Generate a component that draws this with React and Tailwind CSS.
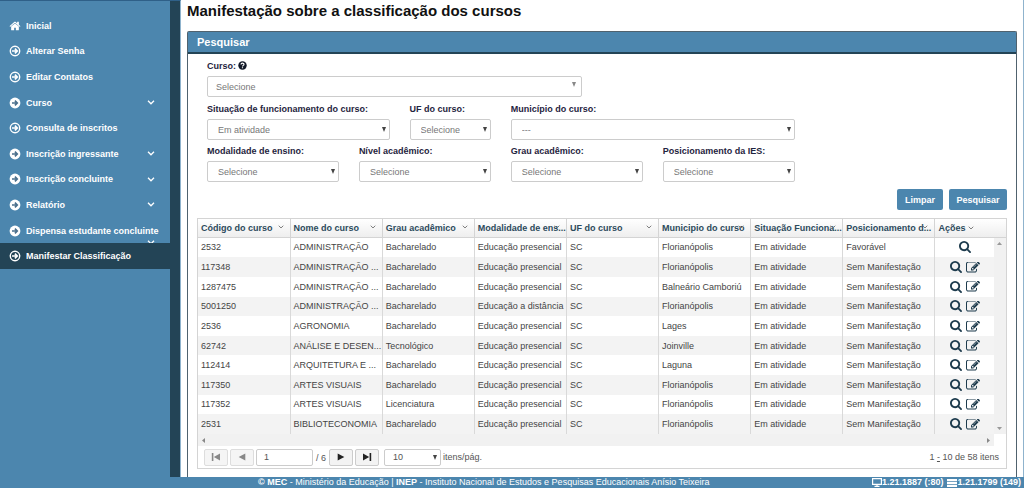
import React from "react";

const HOME =
  "M1472 992v480q0 26-19 45t-45 19h-384v-384h-256v384h-384q-26 0-45-19t-19-45v-480q0-1 .5-3t.5-3l575-474 575 474q1 2 1 6zm223-69l-62 74q-8 9-21 11h-3q-13 0-21-7l-692-577-692 577q-12 8-24 7-13-2-21-11l-62-74q-8-10-7-23.5t11-21.5l719-599q32-26 76-26t76 26l244 204v-195q0-14 9-23t23-9h192q14 0 23 9t9 23v408l219 182q10 8 11 21.5t-7 23.5z";
const SEARCH =
  "M1216 832q0-185-131.5-316.5t-316.5-131.5-316.5 131.5-131.5 316.5 131.5 316.5 316.5 131.5 316.5-131.5 131.5-316.5zm512 832q0 52-38 90t-90 38q-54 0-90-38l-343-342q-179 124-399 124-143 0-273.5-55.5t-225-150-150-225-55.5-273.5 55.5-273.5 150-225 225-150 273.5-55.5 273.5 55.5 225 150 150 225 55.5 273.5q0 220-124 399l343 343q37 37 37 90z";
const EDIT =
  "M888 1184l116-116-152-152-116 116v56h96v96h56zm440-720q-16-16-33 1l-350 350q-17 17-1 33t33-1l350-350q17-17 1-33zm80 594v190q0 119-84.5 203.5t-203.5 84.5h-832q-119 0-203.5-84.5t-84.5-203.5v-832q0-119 84.5-203.5t203.5-84.5h832q63 0 117 25 15 7 18 23 3 17-9 29l-49 49q-14 14-32 8-23-6-45-6h-832q-66 0-113 47t-47 113v832q0 66 47 113t113 47h832q66 0 113-47t47-113v-126q0-13 9-22l64-64q15-15 35-7t20 29zm-96-738l288 288-672 672h-288v-288zm444 132l-92 92-288-288 92-92q28-28 68-28t68 28l152 152q28 28 28 68t-28 68z";

function Glyph({ d, box = "0 0 1792 1792", className }) {
  return (
    <svg viewBox={box} className={className} fill="currentColor" aria-hidden="true">
      <path d={d} />
    </svg>
  );
}

function ArrowCircle({ filled }) {
  return (
    <svg viewBox="0 0 12 12" className="size-3 shrink-0" fill="none" aria-hidden="true">
      {filled ? (
        <circle cx="6" cy="6" r="5.4" fill="#fff" />
      ) : (
        <circle cx="6" cy="6" r="4.7" stroke="#fff" strokeWidth="1.4" />
      )}
      <path
        d="M3 6h5.2M5.9 3.6L8.3 6L5.9 8.4"
        stroke={filled ? "#4a6f8c" : "#fff"}
        strokeWidth="1.6"
      />
    </svg>
  );
}

function Chevron({ className }) {
  return (
    <svg viewBox="0 0 8 5" className={className} fill="none" stroke="currentColor" aria-hidden="true">
      <path d="M1 0.8L4 3.8L7 0.8" strokeWidth="1.3" />
    </svg>
  );
}

const menu = [
  { label: "Inicial", icon: "home" },
  { label: "Alterar Senha" },
  { label: "Editar Contatos" },
  { label: "Curso", sub: true },
  { label: "Consulta de inscritos" },
  { label: "Inscrição ingressante", sub: true },
  { label: "Inscrição concluinte", sub: true },
  { label: "Relatório", sub: true },
  { label: "Dispensa estudante concluinte", sub: true, wraps: true },
  { label: "Manifestar Classificação", active: true },
];

function Sidebar() {
  return (
    <nav className="w-[181px] shrink-0 border-t border-r border-t-[#2f6088] border-r-[#8fb3cd] bg-[#234456]">
      <div className="mr-2.5 h-full bg-[#4c86ae] pt-3">
        <ul className="-mr-2.5 grid h-64 grid-rows-10">
          {menu.map((m) => (
            <li key={m.label} className={m.active ? "bg-[#234456]" : "mr-2.5"}>
              <a
                href="#"
                className="relative flex h-full items-center gap-1 overflow-hidden pl-[9px] text-[9px] font-bold text-white"
              >
                {m.icon ? <Glyph d={HOME} className="size-3 shrink-0" /> : <ArrowCircle filled={m.sub} />}
                <span className="pl-px whitespace-nowrap">{m.label}</span>
                {m.sub && !m.wraps && <Chevron className="mr-[15px] ml-auto h-[5px] w-2" />}
                {m.wraps && <Chevron className="absolute right-[15px] -bottom-0.5 h-[5px] w-2" />}
              </a>
            </li>
          ))}
        </ul>
      </div>
    </nav>
  );
}

function Field({ id, label, value, span, help, searchable }) {
  return (
    <div className={span}>
      <label htmlFor={id} className="flex h-5 items-center gap-0.5 pb-px font-bold whitespace-nowrap text-[#1f2440]">
        {label}
        {help && (
          <svg viewBox="0 0 16 16" className="size-[9px]" role="img" aria-label="Ajuda">
            <circle cx="8" cy="8" r="7.5" fill="#111827" />
            <path d="M5.4 6.2C5.4 2.9 10.6 3 10.6 6c0 1.8-2.5 1.8-2.5 3.6M8 11v2" fill="none" stroke="#fff" strokeWidth="2.1" />
          </svg>
        )}
      </label>
      <div className="relative">
        <select
          id={id}
          className={
            searchable
              ? "block h-[21px] w-full appearance-none rounded-xs border border-[#ccc] bg-white pl-2 text-[#777]"
              : "block h-[21px] w-full appearance-none rounded-xs border border-[#ccc] bg-white pl-2.5 text-[#777]"
          }
        >
          <option>{value}</option>
        </select>
        <svg
          viewBox="0 0 4 5"
          className={
            searchable
              ? "pointer-events-none absolute top-1.5 right-1.5 h-[5px] w-1"
              : "pointer-events-none absolute top-2 right-1 h-[5px] w-1"
          }
          aria-hidden="true"
        >
          <path d="M0 0h4L2 5z" fill={searchable ? "#888" : "#444"} />
        </svg>
      </div>
    </div>
  );
}

const headers = [
  "Código do curso",
  "Nome do curso",
  "Grau acadêmico",
  "Modalidade de ens...",
  "UF do curso",
  "Municipio do curso",
  "Situação Funciona...",
  "Posicionamento d...",
];

const P = "Educação presencial";
const rows = [
  ["2532", "ADMINISTRAÇÃO", "Bacharelado", P, "Florianópolis"],
  ["117348", "ADMINISTRAÇÃO ...", "Bacharelado", P, "Florianópolis"],
  ["1287475", "ADMINISTRAÇÃO ...", "Bacharelado", P, "Balneário Camboriú"],
  ["5001250", "ADMINISTRAÇÃO ...", "Bacharelado", "Educação a distância", "Florianópolis"],
  ["2536", "AGRONOMIA", "Bacharelado", P, "Lages"],
  ["62742", "ANÁLISE E DESEN...", "Tecnológico", P, "Joinville"],
  ["112414", "ARQUITETURA E ...", "Bacharelado", P, "Laguna"],
  ["117350", "ARTES VISUAIS", "Bacharelado", P, "Florianópolis"],
  ["117352", "ARTES VISUAIS", "Licenciatura", P, "Florianópolis"],
  ["2531", "BIBLIOTECONOMIA", "Bacharelado", P, "Florianópolis"],
];

function Grid() {
  return (
    <table className="h-[215px] w-full table-fixed border-collapse text-left text-[#444]">
      <colgroup>
        {headers.map((h) => (
          <col key={h} />
        ))}
        <col className="w-[59px]" />
        <col className="w-3" />
      </colgroup>
      <thead>
        <tr className="h-[18px] bg-linear-to-b from-white to-[#eeeeee] text-[#2c4a5c]">
          {headers.map((h) => (
            <th key={h} className="border-r border-b border-[#d4d4d4] p-0 font-bold">
              <div className="relative pl-[3px] whitespace-nowrap">
                {h}
                <Chevron className="absolute top-[3px] right-1.5 h-1 w-1.5 text-[#777]" />
              </div>
            </th>
          ))}
          <th colSpan={2} className="border-b border-[#d4d4d4] p-0 font-bold">
            <div className="flex items-center gap-0.5 pl-[3px]">
              Ações
              <Chevron className="h-1 w-1.5 text-[#777]" />
            </div>
          </th>
        </tr>
      </thead>
      <tbody>
        {rows.map(([code, name, degree, mode, city], i) => (
          <tr key={code} className="even:bg-[#f3f3f3]">
            {[code, name, degree, mode, "SC", city, "Em atividade", i ? "Sem Manifestação" : "Favorável"].map(
              (v, c) => (
                <td key={c} className="border-r border-[#d9d9d9] p-0 pl-[3px] whitespace-nowrap">
                  {v}
                </td>
              )
            )}
            <td className="p-0">
              <div className="flex items-center justify-center gap-1 text-[#1d3b4d]">
                <button type="button" aria-label="Visualizar">
                  <Glyph d={SEARCH} box="64 128 1664 1664" className="block size-3" />
                </button>
                {i > 0 && (
                  <button type="button" aria-label="Editar">
                    <Glyph d={EDIT} box="0 192 1792 1380" className="block h-[11px] w-3.5" />
                  </button>
                )}
              </div>
            </td>
            {i === 0 && (
              <td rowSpan={10} className="h-px bg-[#f1f1f1] p-0">
                <div className="flex h-full flex-col items-center justify-between py-1">
                  <svg viewBox="0 0 5 3" className="h-[3px] w-[5px]" aria-hidden="true">
                    <path d="M0 3h5L2.5 0z" fill="#999" />
                  </svg>
                  <svg viewBox="0 0 5 3" className="h-[3px] w-[5px]" aria-hidden="true">
                    <path d="M0 0h5L2.5 3z" fill="#999" />
                  </svg>
                </div>
              </td>
            )}
          </tr>
        ))}
      </tbody>
    </table>
  );
}

function PageButton({ label, d, dim }) {
  return (
    <button
      type="button"
      aria-label={label}
      className={
        dim
          ? "flex h-[17px] w-6 items-center justify-center rounded-xs border border-[#ddd] bg-[#f5f5f5] text-[#888]"
          : "flex h-[17px] w-6 items-center justify-center rounded-xs border border-[#ccc] bg-[#f3f3f3] text-[#222]"
      }
    >
      <svg viewBox="0 0 10 8" className="h-2 w-2.5" fill="currentColor" aria-hidden="true">
        <path d={d} />
      </svg>
    </button>
  );
}

function Pager() {
  return (
    <div className="flex h-[22px] items-center gap-0.5 pr-[7px] pl-1.5 text-[#555]">
      <PageButton dim label="Primeira página" d="M0.8 0h1.6v8H0.8zM9 0.5v7L2.8 4z" />
      <PageButton dim label="Página anterior" d="M8.3 0.5v7L1.7 4z" />
      <input
        aria-label="Página"
        defaultValue="1"
        className="h-[17px] w-[57px] rounded-xs border border-[#ccc] bg-white pl-[7px]"
      />
      <span className="px-px pt-0.5 whitespace-nowrap">/ 6</span>
      <PageButton label="Próxima página" d="M1.7 0.5v7L8.3 4z" />
      <PageButton label="Última página" d="M7.6 0h1.6v8H7.6zM1 0.5v7L7.2 4z" />
      <div className="relative ml-[3px]">
        <select
          id="page-size"
          className="block h-[17px] w-[57px] appearance-none rounded-xs border border-[#ccc] bg-white pl-2"
        >
          <option>10</option>
        </select>
        <svg viewBox="0 0 4 5" className="pointer-events-none absolute top-1.5 right-1 h-[5px] w-1" aria-hidden="true">
          <path d="M0 0h4L2 5z" fill="#444" />
        </svg>
      </div>
      <label htmlFor="page-size">itens/pág.</label>
      <span className="ml-auto">
        1 <span className="underline">-</span> 10 de 58 itens
      </span>
    </div>
  );
}

export default function App() {
  return (
    <div className="flex min-h-screen flex-col bg-white font-['Liberation_Sans',Arial,sans-serif] text-[9px] leading-3">
      <div className="flex flex-1">
        <Sidebar />
        <div className="flex min-w-0 flex-1 flex-col border-r border-[#8fb3cd] px-1.5">
          <h1 className="flex h-[31px] items-start pt-px text-[15px] leading-5 font-bold text-[#111]">
            Manifestação sobre a classificação dos cursos
          </h1>
          <main className="flex-1 rounded-t-xs border-x border-t border-[#50626e]">
            <h2 className="h-[22px] border-b-2 border-[#234456] bg-[#4c86ae] pl-[9px] text-[11px] leading-5 font-bold text-white">
              Pesquisar
            </h2>
            <form className="grid grid-cols-16 px-[9px] pt-0.5">
              <Field span="col-span-8 h-[43px] pl-2.5 pr-5" id="curso" label="Curso:" value="Selecione" help searchable />
              <div className="col-span-8" />
              <Field span="col-span-4 h-[42px] px-2.5" id="situacao" label="Situação de funcionamento do curso:" value="Em atividade" />
              <Field span="col-span-2 px-2.5" id="uf" label="UF do curso:" value="Selecione" />
              <Field span="col-span-6 px-2.5" id="municipio" label="Município do curso:" value="---" />
              <div className="col-span-4" />
              <Field span="col-span-3 h-[43px] px-2.5" id="modalidade" label="Modalidade de ensino:" value="Selecione" />
              <Field span="col-span-3 px-2.5" id="nivel" label="Nível acadêmico:" value="Selecione" />
              <Field span="col-span-3 px-2.5" id="grau" label="Grau acadêmico:" value="Selecione" />
              <Field span="col-span-3 px-2.5" id="posicionamento" label="Posicionamento da IES:" value="Selecione" />
              <div className="col-span-16 mt-[5px] flex h-[29px] items-start justify-end gap-1.5">
                <button type="reset" className="h-[21px] w-[46px] rounded-xs bg-[#4c86ae] font-bold text-white">
                  Limpar
                </button>
                <button type="submit" className="h-[21px] w-[58px] rounded-xs bg-[#4c86ae] font-bold text-white">
                  Pesquisar
                </button>
              </div>
            </form>
            <section className="mx-[9px] mb-2 border border-[#d4d4d4]">
              <Grid />
              <div className="mr-3 flex h-3 items-center justify-between bg-[#f1f1f1] px-1">
                <svg viewBox="0 0 3 5" className="h-[5px] w-[3px]" aria-hidden="true">
                  <path d="M3 0v5L0 2.5z" fill="#888" />
                </svg>
                <svg viewBox="0 0 3 5" className="h-[5px] w-[3px]" aria-hidden="true">
                  <path d="M0 0v5l3-2.5z" fill="#888" />
                </svg>
              </div>
              <Pager />
            </section>
          </main>
        </div>
      </div>
      <footer className="flex h-[11px] items-center bg-[#4c86ae] pr-[3px] pl-[258px] leading-[11px] text-white">
        <span>
          <b>© MEC</b> - Ministério da Educação | <b>INEP</b> - Instituto Nacional de Estudos e Pesquisas Educacionais
          Anísio Teixeira
        </span>
        <span className="ml-auto flex items-center font-bold">
          <svg viewBox="0 0 10 9" className="h-[9px] w-2.5" aria-hidden="true">
            <path d="M0.6 0.6h8.8v5.8H0.6zM2.5 8.3h5M5 6.4v2" fill="none" stroke="#fff" strokeWidth="1.2" />
          </svg>
          1.21.1887 (:80)
        </span>
        <span className="ml-1 flex items-center font-bold">
          <svg viewBox="0 0 10 8" className="h-2 w-2.5" aria-hidden="true">
            <path d="M0 0h10v2.2H0zM0 2.9h10v2.2H0zM0 5.8h10V8H0z" fill="#fff" />
          </svg>
          1.21.1799 (149)
        </span>
      </footer>
    </div>
  );
}
